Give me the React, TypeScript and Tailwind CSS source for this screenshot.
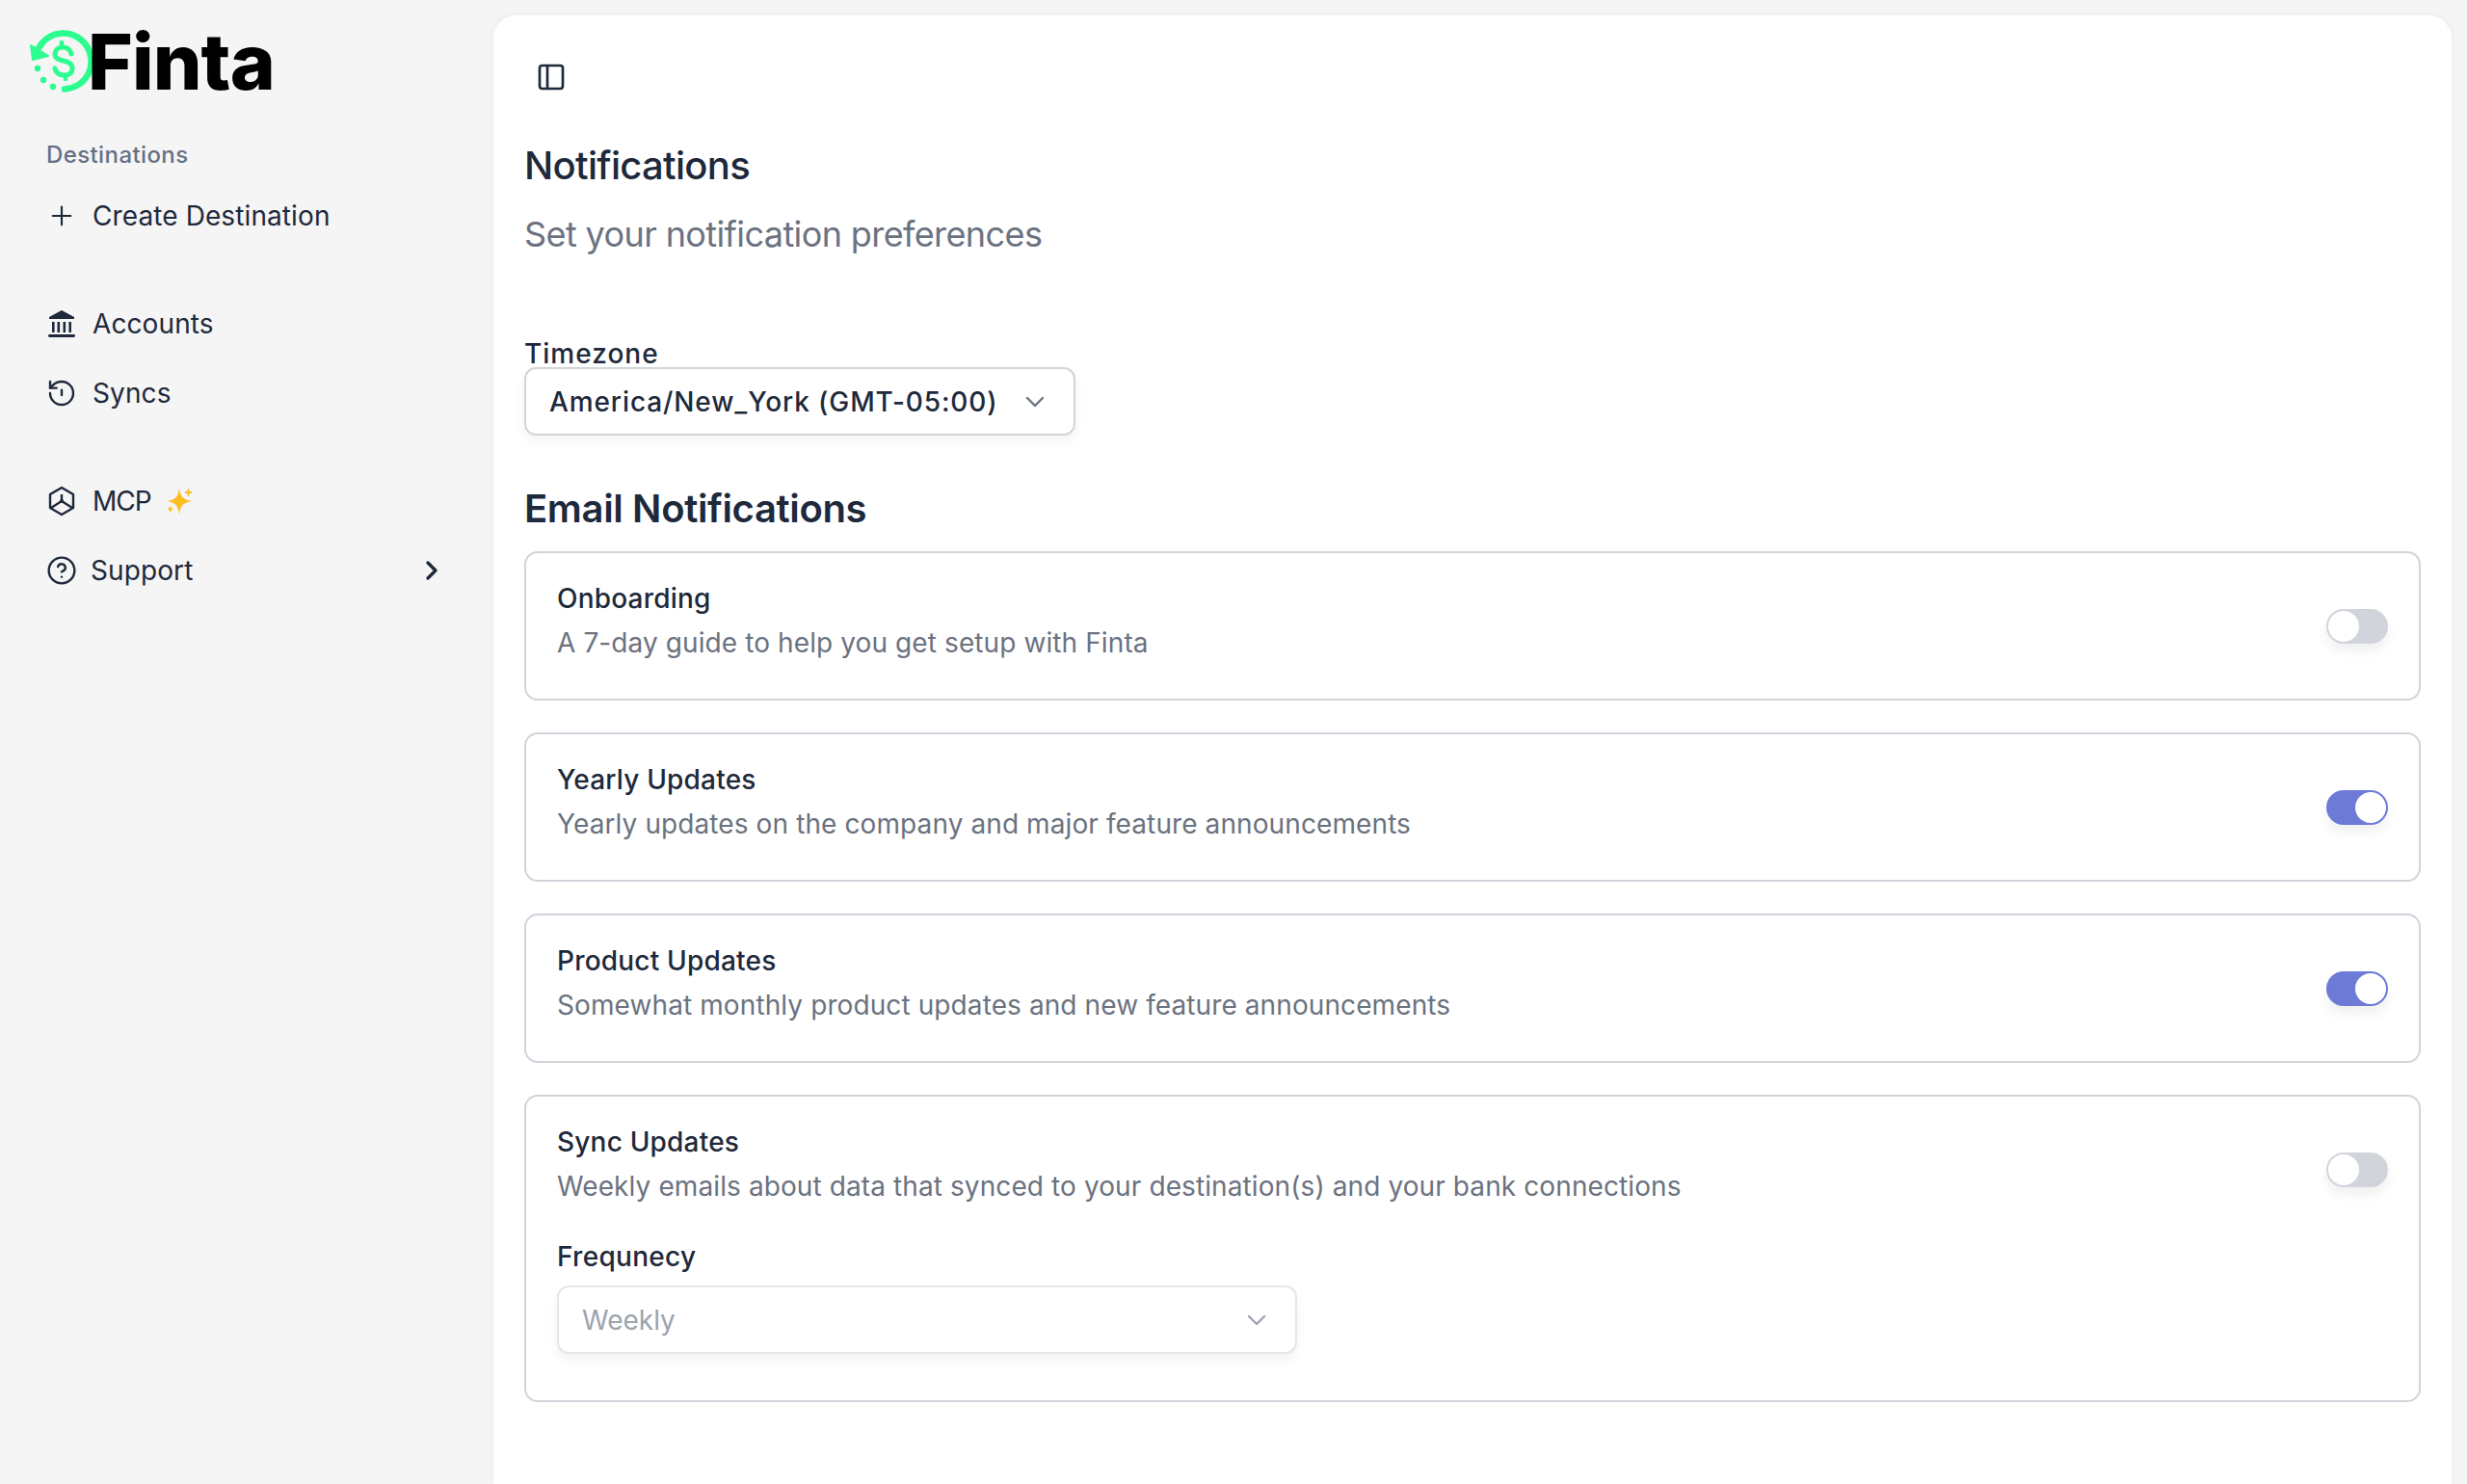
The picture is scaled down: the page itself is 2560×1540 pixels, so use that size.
import { ChevronDown, ChevronRight, CircleHelp, PanelLeft, Plus } from "lucide-react";
import type { ReactNode } from "react";

function FintaMark() {
  return (
    <svg width="68" height="68" viewBox="0 0 68 68" fill="none" className="shrink-0" aria-hidden>
      <path d="M36 61.5A29 29 0 1 0 9 19" stroke="#2bfd8f" strokeWidth="6.5" strokeLinecap="round" />
      <path d="M1 16L19 27L3 31Z" fill="#2bfd8f" stroke="#2bfd8f" strokeWidth="2" strokeLinejoin="round" />
      <circle cx="8" cy="40" r="3.2" fill="#2bfd8f" />
      <circle cx="14" cy="52" r="3.2" fill="#2bfd8f" />
      <circle cx="24" cy="59" r="3.2" fill="#2bfd8f" />
      <path d="M43 25C42 20 38 18 34 18C29 18 26 21 26 25C26 35 44 29 44 40C44 45 40 47 36 47C31 47 27 45 26 40" stroke="#2bfd8f" strokeWidth="5" strokeLinecap="round" />
      <path d="M33 13V18M37 47V51" stroke="#2bfd8f" strokeWidth="4.5" strokeLinecap="round" />
    </svg>
  );
}

function BankIcon() {
  return (
    <svg width="28" height="30" viewBox="0 0 28 30" className="shrink-0" fill="#1e293b" aria-hidden>
      <path d="M14 1L27 8V10H1V8Z" />
      <rect x="4" y="13" width="2.6" height="11" />
      <rect x="9.5" y="13" width="2.6" height="11" />
      <rect x="15.5" y="13" width="2.6" height="11" />
      <rect x="21.4" y="13" width="2.6" height="11" />
      <rect x="0" y="26" width="28" height="3" rx="1.4" />
    </svg>
  );
}

function SyncIcon() {
  return (
    <svg width="32" height="32" viewBox="0 0 24 24" fill="none" stroke="#1e293b" strokeWidth="1.8" strokeLinecap="round" strokeLinejoin="round" className="shrink-0" aria-hidden>
      <path d="M3 12a9 9 0 1 0 9-9 9.75 9.75 0 0 0-6.74 2.74L3 8" />
      <path d="M3 3v5h5" />
      <path d="M12 9.5v4" />
    </svg>
  );
}

function CubeIcon() {
  return (
    <svg width="28" height="32" viewBox="0 0 28 32" fill="none" stroke="#1e293b" strokeWidth="2.4" strokeLinejoin="round" className="shrink-0" aria-hidden>
      <path d="M14 2L26 9V23L14 30L2 23V9Z" />
      <path d="M14 9V16M14 16L3 23M14 16L25 23" />
      <circle cx="14" cy="16" r="2" fill="#1e293b" stroke="none" />
    </svg>
  );
}

function SparkIcon() {
  return (
    <svg width="28" height="28" viewBox="0 0 28 28" fill="#fbbf24" className="shrink-0" aria-hidden>
      <path d="M13 1C14.5 10 17 12.5 27 14C17 15.5 14.5 18 13 28C11.5 18 9 15.5 0 14C9 12.5 11.5 10 13 1Z" />
      <path d="M21.5 1.5h2v2.5h2.5v2h-2.5v2.5h-2v-2.5h-2.5v-2h2.5Z" />
      <path d="M3 19.5h1.6v2h2v1.6h-2v2h-1.6v-2h-2v-1.6h2Z" />
    </svg>
  );
}

function NavRow({ icon, label, gap, className, children }: { icon: ReactNode; label: string; gap: string; className: string; children?: ReactNode }) {
  return (
    <div className={`flex h-[44px] items-center pl-[48px] pr-[48px] text-[28px] leading-none tracking-[0.1px] text-[#1e293b] ${className}`}>
      <span className="flex w-[32px] shrink-0 items-center justify-center">{icon}</span>
      <span className={gap}>{label}</span>
      {children}
    </div>
  );
}

function Toggle({ on }: { on: boolean }) {
  return (
    <div className={`mt-[25px] flex h-[36px] w-[64px] shrink-0 rounded-full border-2 shadow-[0_8px_12px_rgba(0,0,0,0.06)] ${on ? "justify-end border-[#6d7ad6] bg-[#6d7ad6]" : "justify-start border-[#d1d5db] bg-[#d1d5db]"}`}>
      <div className="size-[32px] rounded-full bg-white" />
    </div>
  );
}

function SelectBox({ value, muted, width }: { value: string; muted?: boolean; width: string }) {
  return (
    <div className={`flex h-[71px] items-center justify-between rounded-[12px] border-2 bg-white pl-[24px] pr-[24px] text-[28px] leading-none shadow-[0_6px_12px_rgba(0,0,0,0.05)] ${width} ${muted ? "border-[#e5e7eb] font-normal text-[#9ca3af]" : "border-[#d1d5db] font-medium tracking-[0.9px] text-[#1e293b]"}`}>
      <span>{value}</span>
      <ChevronDown size={32} strokeWidth={1.8} className={muted ? "text-[#9ca3af]" : "text-[#6b7280]"} />
    </div>
  );
}

function Card({ title, desc, on, children }: { title: string; desc: string; on: boolean; children?: ReactNode }) {
  return (
    <div className="flex items-start justify-between rounded-[14px] border-2 border-[#d1d5db] pb-[44px] pl-[32px] pr-[32px] pt-[33px]">
      <div>
        <div className="text-[28px] font-medium leading-[28px] tracking-[0.2px] text-[#1e293b]">{title}</div>
        <div className="mt-[18px] text-[28px] leading-[28px] tracking-[0.1px] text-[#6b7280]">{desc}</div>
        {children}
      </div>
      <Toggle on={on} />
    </div>
  );
}

export default function App() {
  return (
    <div className="flex h-[1540px] w-[2560px] overflow-hidden bg-[#f5f5f5] font-[family-name:Inter,sans-serif]">
      <aside className="flex w-[512px] shrink-0 flex-col">
        <div className="flex h-[128px] items-start pl-[31px] pt-[31px]">
          <FintaMark />
          <span className="-ml-[8px] -mt-[17px] text-[80px] font-extrabold leading-[100px] tracking-[-0.9px] text-black">Finta</span>
        </div>
        <div className="pl-[48px] pt-[17px] text-[24px] font-medium leading-[32px] tracking-[0.4px] text-[#667085]">Destinations</div>
        <NavRow className="mt-[25px]" gap="ml-[16px]" icon={<Plus size={32} strokeWidth={1.6} />} label="Create Destination" />
        <NavRow className="mt-[68px]" gap="ml-[16px]" icon={<BankIcon />} label="Accounts" />
        <NavRow className="mt-[28px]" gap="ml-[16px]" icon={<SyncIcon />} label="Syncs" />
        <NavRow className="mt-[68px]" gap="ml-[16px] -tracking-[1px]" icon={<CubeIcon />} label="MCP">
          <span className="ml-[16px]"><SparkIcon /></span>
        </NavRow>
        <NavRow className="mt-[28px] justify-start" gap="ml-[14px] flex-1" icon={<CircleHelp size={32} strokeWidth={1.8} />} label="Support">
          <ChevronRight size={32} strokeWidth={2.5} />
        </NavRow>
      </aside>
      <main className="mr-[16px] mt-[16px] flex-1 rounded-t-[24px] bg-white pl-[32px] pr-[32px] shadow-[0_0_10px_rgba(0,0,0,0.05)]">
        <div className="pt-[48px]">
          <PanelLeft size={32} strokeWidth={2} className="ml-[12px] text-[#1e293b]" />
        </div>
        <h1 className="mt-[52px] text-[40px] font-medium leading-[48px] tracking-[-0.7px] text-[#1e293b]">Notifications</h1>
        <p className="mt-[25px] text-[36px] leading-[44px] tracking-[-0.6px] text-[#6b7280]">Set your notification preferences</p>
        <div className="mt-[88px] text-[28px] font-medium leading-[28px] tracking-[1px] text-[#1e293b]">Timezone</div>
        <SelectBox value="America/New_York (GMT-05:00)" width="w-[572px]" />
        <h2 className="mt-[52px] text-[40px] font-semibold leading-[48px] tracking-[-0.35px] text-[#1e293b]">Email Notifications</h2>
        <div className="mt-[20px] flex flex-col gap-[33px]">
          <Card title="Onboarding" desc="A 7-day guide to help you get setup with Finta" on={false} />
          <Card title="Yearly Updates" desc="Yearly updates on the company and major feature announcements" on />
          <Card title="Product Updates" desc="Somewhat monthly product updates and new feature announcements" on />
          <Card title="Sync Updates" desc="Weekly emails about data that synced to your destination(s) and your bank connections" on={false}>
            <div className="mt-[45px] text-[28px] font-medium leading-[28px] tracking-[0.3px] text-[#1e293b]">Frequnecy</div>
            <div className="mb-[4px] mt-[16px]">
              <SelectBox value="Weekly" muted width="w-[768px]" />
            </div>
          </Card>
        </div>
      </main>
    </div>
  );
}
